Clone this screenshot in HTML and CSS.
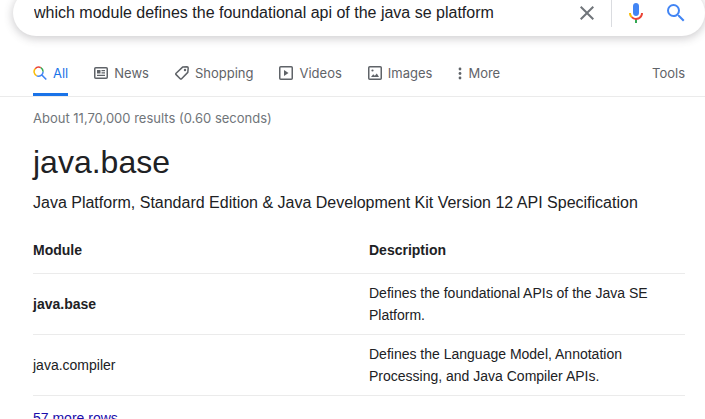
FILE: index.html
```html
<!DOCTYPE html>
<html lang="en">
<head>
<meta charset="utf-8">
<title>which module defines the foundational api of the java se platform - Search</title>
<link rel="stylesheet" href="styles.css">
</head>
<body>
<header>
  <form class="search" role="search">
    <input class="query" type="text" aria-label="Search" value="which module defines the foundational api of the java se platform">
    <button class="icon-button clear" type="button" aria-label="Clear">
      <svg width="24" height="24" viewBox="0 0 24 24"><path fill="#70757a" d="M19 6.41 17.59 5 12 10.59 6.41 5 5 6.41 10.59 12 5 17.59 6.41 19 12 13.41 17.59 19 19 17.59 13.41 12z"/></svg>
    </button>
    <button class="icon-button voice" type="button" aria-label="Search by voice">
      <svg width="24" height="24" viewBox="0 0 24 24"><path fill="#4285f4" d="M12 15c1.700 0 3-1.300 3-3V5c0-1.700-1.300-3-3-3S9 3.300 9 5v7c0 1.700 1.300 3 3 3z"/><path fill="#34a853" d="M11 18.100h2V22h-2z"/><path fill="#fbbc04" d="M7.050 16.870C5.770 15.600 5 13.900 5 12h2c0 1.450.560 2.420 1.470 3.380z"/><path fill="#ea4335" d="M12 16.930a4.970 5.250 0 0 1-3.540-1.550l-1.410 1.490A6.900 6.900 0 0 0 12 19c3.870 0 6.990-2.920 7-7h-2c0 2.920-2.240 4.930-5 4.930z"/></svg>
    </button>
    <button class="icon-button" type="submit" aria-label="Search">
      <svg width="24" height="24" viewBox="0 0 24 24"><path fill="#4285f4" d="M15.500 14h-.790l-.280-.270A6.470 6.470 0 0 0 16 9.500 6.500 6.500 0 1 0 9.500 16c1.610 0 3.090-.590 4.230-1.570l.270.280v.790l5 4.990L20.490 19zm-6 0a4.500 4.500 0 1 1 0-9 4.500 4.500 0 0 1 0 9z"/></svg>
    </button>
  </form>
  <nav class="tabs">
    <a class="tab active" href="#all">
      <svg class="tab-icon" viewBox="0 0 14 14" fill="none" stroke-width="1.500"><path stroke="#ea4335" d="M2.200 2.700A4.600 4.600 0 0 1 7.800 1.700"/><path stroke="#34a853" d="M7.800 1.700A4.600 4.600 0 0 1 10.100 5.700"/><path stroke="#fbbc04" d="M2.200 2.700A4.600 4.600 0 0 0 3.800 9.900"/><path stroke="#4285f4" d="M3.800 9.900A4.600 4.600 0 0 0 10.100 5.700M8.700 8.900l4.600 4.600"/></svg>All</a>
    <a class="tab" href="#news">
      <svg class="tab-icon" viewBox="0 0 14 14"><rect x="0.750" y="1.750" width="12.500" height="10.500" rx="1" fill="none" stroke="currentColor" stroke-width="1.500"/><path fill="currentColor" d="M3 4h3.500v3.500H3zM7.500 4H11v1.200H7.500zM7.500 6.300H11v1.200H7.500zM3 8.700h8v1.200H3z"/></svg>News</a>
    <a class="tab" href="#shopping">
      <svg class="tab-icon" viewBox="0 0 14 14"><path fill="none" stroke="currentColor" stroke-width="1.500" stroke-linejoin="round" d="M7.600 1.100 12 .800q1.200 0 1.200 1.200l-.400 4.400-6.200 6.300q-.700.700-1.400 0L1.100 8.600q-.700-.700 0-1.400z"/><circle cx="10" cy="4" r="1.200" fill="currentColor"/></svg>Shopping</a>
    <a class="tab" href="#videos">
      <svg class="tab-icon" viewBox="0 0 14 14"><rect x="0.750" y="0.750" width="12.500" height="12.500" rx="1" fill="none" stroke="currentColor" stroke-width="1.500"/><path fill="currentColor" d="M5 4v6l4.500-3z"/></svg>Videos</a>
    <a class="tab" href="#images">
      <svg class="tab-icon" viewBox="0 0 14 14"><rect x="0.750" y="0.750" width="12.500" height="12.500" rx="1" fill="none" stroke="currentColor" stroke-width="1.500"/><path fill="currentColor" d="M3 11 5.200 8.300l1.600 1.500L8.800 7.400 11 11z"/><circle cx="4.500" cy="4.500" r="1.100" fill="currentColor"/></svg>Images</a>
    <button class="tab" type="button">
      <svg class="more-icon" viewBox="0 0 4 14" fill="currentColor"><circle cx="2" cy="3" r="1.400"/><circle cx="2" cy="7.500" r="1.400"/><circle cx="2" cy="12" r="1.400"/></svg>More</button>
    <button class="tab tools" type="button">Tools</button>
  </nav>
</header>
<main>
  <p class="stats">About 11,70,000 results (0.60 seconds)</p>
  <h1>java.base</h1>
  <p class="summary">Java Platform, Standard Edition &amp; Java Development Kit Version 12 API Specification</p>
  <table>
    <thead>
      <tr><th scope="col">Module</th><th scope="col">Description</th></tr>
    </thead>
    <tbody>
      <tr><td><b>java.base</b></td><td>Defines the foundational APIs of the Java SE Platform.</td></tr>
      <tr><td>java.compiler</td><td>Defines the Language Model, Annotation Processing, and Java Compiler APIs.</td></tr>
    </tbody>
  </table>
  <a class="more-rows" href="#rows">57 more rows</a>
</main>
</body>
</html>
```
FILE: styles.css
```css
* { box-sizing: border-box; }
html { overflow: hidden; }
body {
  margin: 0;
  background: #fff;
  color: #202124;
  font: 14px/22px "Liberation Sans", Arial, sans-serif;
}
button {
  border: 0;
  padding: 0;
  background: none;
  font: inherit;
  color: inherit;
  cursor: pointer;
}
header {
  display: flow-root;
  border-bottom: 1px solid #ebebeb;
}
.search {
  display: flex;
  align-items: center;
  height: 46px;
  margin: -10px 0 0 13px;
  padding: 0 17px 0 21px;
  border-radius: 24px;
  box-shadow: 0 2px 8px 1px rgba(64, 60, 67, 0.24);
}
.query {
  flex: 1;
  min-width: 0;
  border: 0;
  padding: 0;
  outline: 0;
  background: none;
  color: #202124;
  font: 16px/24px "Liberation Sans", Arial, sans-serif;
}
.icon-button {
  display: flex;
  align-items: center;
  height: 28px;
}
.clear {
  padding-right: 12px;
}
.voice {
  padding: 0 16px 0 12px;
  border-left: 1px solid #dadce0;
}
.tabs {
  display: flex;
  gap: 26px;
  margin-top: 14px;
  padding: 0 20px 0 33px;
}
.tab {
  display: flex;
  align-items: center;
  gap: 6px;
  height: 46px;
  padding-top: 2px;
  border-bottom: 3px solid transparent;
  color: #5f6368;
  font: 13px/20px Inter, "Liberation Sans", sans-serif;
  text-decoration: none;
}
.tab.active {
  border-color: #1a73e8;
  color: #1a73e8;
}
.tab-icon {
  width: 14px;
  height: 14px;
}
.more-icon {
  width: 4px;
  height: 14px;
}
.tools { margin-left: auto; }
main { padding: 0 20px 0 33px; }
.stats {
  margin: 0;
  padding-top: 11px;
  color: #70757a;
  font: 13px/20px Inter, "Liberation Sans", sans-serif;
}
h1 {
  margin: 14px 0 0;
  font-size: 32px;
  line-height: 40px;
  font-weight: 400;
}
.summary {
  margin: 9px 0 0;
  font-size: 16px;
  line-height: 24px;
}
table {
  width: 100%;
  margin-top: 20px;
  border-collapse: collapse;
  table-layout: fixed;
}
th, td {
  padding: 8px 20px 8px 0;
  border-bottom: 1px solid #ebebeb;
  text-align: left;
}
th {
  width: 50%;
  padding: 4px 0 12px;
}
th:first-child { width: 336px; }
.more-rows {
  display: block;
  margin-top: 11px;
  color: #1a0dab;
  text-decoration: none;
}
```
